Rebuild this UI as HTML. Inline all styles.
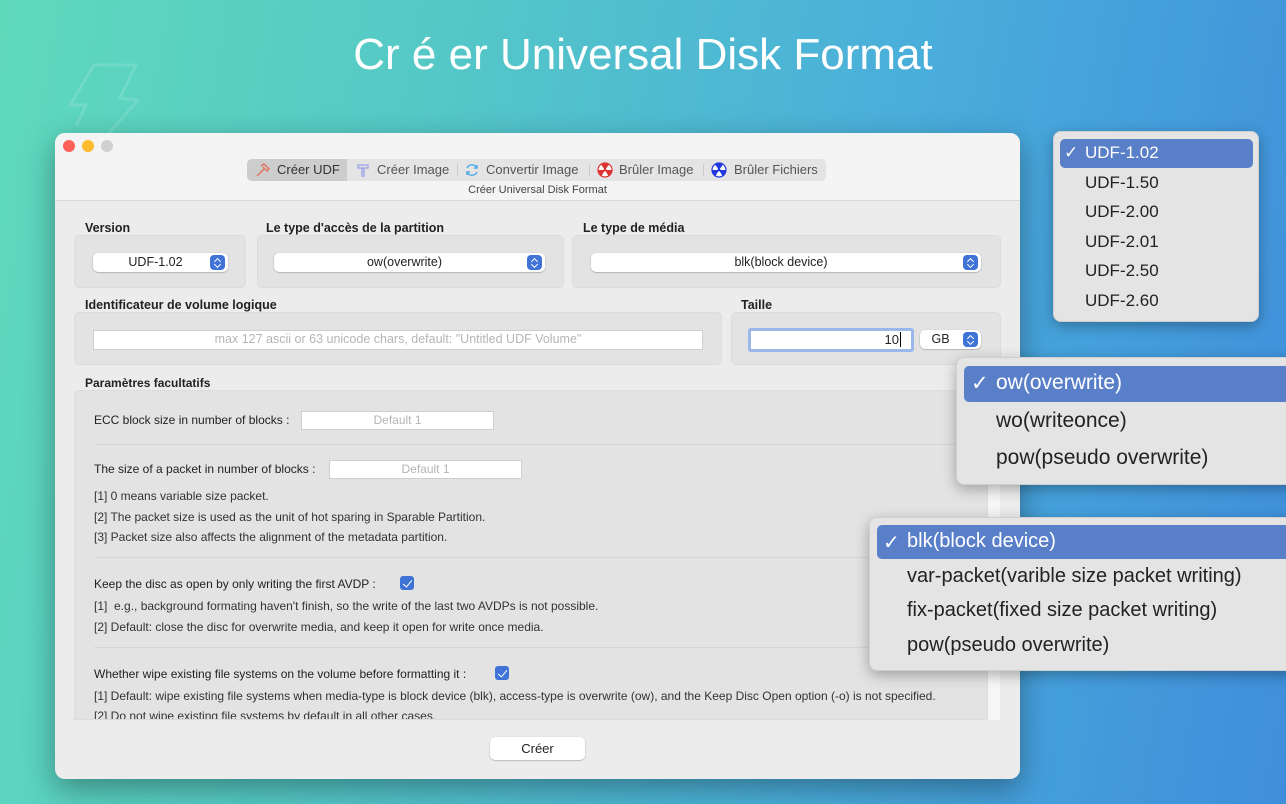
<!DOCTYPE html>
<html><head><meta charset="utf-8"><style>
*{margin:0;padding:0;box-sizing:border-box}
body{width:1286px;height:804px;overflow:hidden;position:relative;font-family:"Liberation Sans",sans-serif;
background:linear-gradient(100deg,#5fd9bc 0%,#55c9c6 30%,#4aaedb 65%,#3f8edb 100%);}
.a{position:absolute}
.t{position:absolute;white-space:nowrap}
.win{left:55px;top:133px;width:965px;height:646px;background:#ececec;border-radius:10px;overflow:hidden;box-shadow:0 10px 30px rgba(0,0,0,.35)}
.bx{background:#e3e3e3;border-radius:5px;border:1px solid #dcdcdc}
.pop{background:#fff;border-radius:5px;box-shadow:0 0.5px 1.5px rgba(0,0,0,.35);font-size:12.5px;color:#222;text-align:center;line-height:19px}
.ar{position:absolute;right:3px;top:2px;width:15px;height:15px;border-radius:4px;background:#3f74d6}
.ar:before,.ar:after{content:"";position:absolute;left:5px;width:4px;height:4px;border:solid #fff;border-width:1.3px 0 0 1.3px}
.ar:before{top:3.5px;transform:rotate(45deg)}
.ar:after{top:6.5px;transform:rotate(225deg)}
.lb{font-size:12.5px;font-weight:bold;color:#222}
.inp{background:#fff;border:1px solid #cfcfcf;font-size:12px;color:#b5b5b5;text-align:center;line-height:17px}
.n{font-size:12px;color:#333}
.sep{height:1px;background:#d6d6d6}
.cb{width:14px;height:14px;border-radius:3px;background:#3f74d6}
.cb:after{content:"";position:absolute;left:4.5px;top:1.5px;width:4px;height:8px;border:solid #fff;border-width:0 1.8px 1.8px 0;transform:rotate(40deg)}
.menu{background:#e4e4e4;border-radius:8px;box-shadow:0 4px 14px rgba(0,0,0,.3);border:1px solid #cfcfcf}
.hl{background:#5a7fc9;border-radius:5px}
.mi{color:#222}
</style></head><body>
<svg class="a" style="left:64px;top:60px" width="80" height="75" viewBox="0 0 80 75"><path d="M30 5 L72 5 L56 38 L74 40 L44 74 M12 66 L22 45 L6 45 L30 5" fill="none" stroke="rgba(255,255,255,.13)" stroke-width="3" stroke-linejoin="round"/></svg>
<div class="t" style="left:0;width:1286px;top:26px;text-align:center;color:#fff;font-size:44px;line-height:58px">Cr é er Universal Disk Format</div>

<div class="a win">
 <div class="a" style="left:0;top:0;width:965px;height:68px;background:#f4f4f4;border-bottom:1px solid #d8d8d8"></div>
 <div class="a" style="left:8px;top:7px;width:12px;height:12px;border-radius:50%;background:#fe5f57"></div>
 <div class="a" style="left:27px;top:7px;width:12px;height:12px;border-radius:50%;background:#febc2e"></div>
 <div class="a" style="left:46px;top:7px;width:12px;height:12px;border-radius:50%;background:#d0d0d0"></div>
 <div class="a" style="left:192px;top:26px;width:579px;height:22px;background:#e4e4e4;border-radius:5px"></div>
 <div class="a" style="left:192px;top:26px;width:100px;height:22px;background:#cdcdcd;border-radius:5px 0 0 5px"></div>
 <svg class="a" style="left:200px;top:29px" width="16" height="16" viewBox="0 0 16 16"><path d="M2 14 L9 7 M6 4 L9 2 L14 7 L12 9 L8 5" fill="none" stroke="#e0715c" stroke-width="1.4"/></svg>
 <div class="t" style="left:222px;top:29px;font-size:13px;color:#333">Créer UDF</div>
 <svg class="a" style="left:300px;top:29px" width="16" height="16" viewBox="0 0 16 16"><path d="M3 3 H13 V6 H3Z M7 6 V15 M9 6 V15" fill="none" stroke="#9aa0e6" stroke-width="1.3"/></svg>
 <div class="t" style="left:322px;top:29px;font-size:13px;color:#555">Créer Image</div>
 <div class="a" style="left:402px;top:31px;width:1px;height:12px;background:#ccc"></div>
 <svg class="a" style="left:409px;top:29px" width="16" height="16" viewBox="0 0 16 16"><path d="M13 6 A5.5 5.5 0 0 0 3 6 M3 10 A5.5 5.5 0 0 0 13 10 M13 3 V6 H10 M3 13 V10 H6" fill="none" stroke="#4aa8e6" stroke-width="1.4"/></svg>
 <div class="t" style="left:431px;top:29px;font-size:13px;color:#555">Convertir Image</div>
 <div class="a" style="left:534px;top:31px;width:1px;height:12px;background:#ccc"></div>
 <svg class="a" style="left:542px;top:29px" width="16" height="16" viewBox="0 0 16 16"><circle cx="8" cy="8" r="7" fill="#fff" stroke="#d33" stroke-width="1.2"/><path d="M8 8 L4 2.5 A7 7 0 0 1 12 2.5Z M8 8 L15 8 A7 7 0 0 1 11.5 14Z M8 8 L4.5 14 A7 7 0 0 1 1 8Z" fill="#d33"/><circle cx="8" cy="8" r="1.5" fill="#d33"/></svg>
 <div class="t" style="left:564px;top:29px;font-size:13px;color:#555">Brûler Image</div>
 <div class="a" style="left:648px;top:31px;width:1px;height:12px;background:#ccc"></div>
 <svg class="a" style="left:656px;top:29px" width="16" height="16" viewBox="0 0 16 16"><circle cx="8" cy="8" r="7" fill="#fff" stroke="#2237e0" stroke-width="1.2"/><path d="M8 8 L4 2.5 A7 7 0 0 1 12 2.5Z M8 8 L15 8 A7 7 0 0 1 11.5 14Z M8 8 L4.5 14 A7 7 0 0 1 1 8Z" fill="#2237e0"/><circle cx="8" cy="8" r="1.5" fill="#2237e0"/></svg>
 <div class="t" style="left:679px;top:29px;font-size:13px;color:#555">Brûler Fichiers</div>
 <div class="t" style="left:0;width:965px;text-align:center;top:51px;font-size:11px;color:#444">Créer Universal Disk Format</div>

 <div class="t lb" style="left:30px;top:88px">Version</div>
 <div class="t lb" style="left:211px;top:88px">Le type d'accès de la partition</div>
 <div class="t lb" style="left:528px;top:88px">Le type de média</div>
 <div class="a bx" style="left:19px;top:102px;width:172px;height:53px"></div>
 <div class="a bx" style="left:202px;top:102px;width:307px;height:53px"></div>
 <div class="a bx" style="left:517px;top:102px;width:429px;height:53px"></div>
 <div class="a pop" style="left:38px;top:120px;width:135px;height:19px;padding-right:10px">UDF-1.02<div class="ar"></div></div>
 <div class="a pop" style="left:219px;top:120px;width:271px;height:19px;padding-right:10px">ow(overwrite)<div class="ar"></div></div>
 <div class="a pop" style="left:536px;top:120px;width:390px;height:19px;padding-right:10px">blk(block device)<div class="ar"></div></div>

 <div class="t lb" style="left:30px;top:165px">Identificateur de volume logique</div>
 <div class="t lb" style="left:686px;top:165px">Taille</div>
 <div class="a bx" style="left:19px;top:179px;width:648px;height:53px"></div>
 <div class="a bx" style="left:676px;top:179px;width:270px;height:53px"></div>
 <div class="a inp" style="left:38px;top:197px;width:610px;height:20px;font-size:12.5px">max 127 ascii or 63 unicode chars, default: "Untitled UDF Volume"</div>
 <div class="a" style="left:693px;top:195px;width:166px;height:24px;border:3px solid #9ab8ea;border-radius:3px;background:#fff"><div class="t" style="right:10px;top:1px;font-size:13px;color:#222;line-height:16px">10<span style="border-left:1px solid #000;margin-left:1px"></span></div></div>
 <div class="a pop" style="left:865px;top:197px;width:61px;height:19px;padding-right:20px">GB<div class="ar"></div></div>

 <div class="t lb" style="left:30px;top:243px;font-size:12px">Paramètres facultatifs</div>
 <div class="a bx" style="left:19px;top:257px;width:914px;height:330px;border-radius:5px 5px 0 0;overflow:hidden">
  <div class="t n" style="left:19px;top:22px;color:#222">ECC block size in number of blocks :</div>
  <div class="a inp" style="left:226px;top:20px;width:193px;height:19px">Default 1</div>
  <div class="a sep" style="left:19px;top:53px;width:900px"></div>
  <div class="t n" style="left:19px;top:71px;color:#222">The size of a packet in number of blocks :</div>
  <div class="a inp" style="left:254px;top:69px;width:193px;height:19px">Default 1</div>
  <div class="t n" style="left:19px;top:98px">[1] 0 means variable size packet.</div>
  <div class="t n" style="left:19px;top:119px">[2] The packet size is used as the unit of hot sparing in Sparable Partition.</div>
  <div class="t n" style="left:19px;top:139px">[3] Packet size also affects the alignment of the metadata partition.</div>
  <div class="a sep" style="left:19px;top:166px;width:900px"></div>
  <div class="t n" style="left:19px;top:186px;color:#222">Keep the disc as open by only writing the first AVDP :</div>
  <div class="a cb" style="left:325px;top:185px"></div>
  <div class="t n" style="left:19px;top:208px">[1]&nbsp; e.g., background formating haven't finish, so the write of the last two AVDPs is not possible.</div>
  <div class="t n" style="left:19px;top:229px">[2] Default: close the disc for overwrite media, and keep it open for write once media.</div>
  <div class="a sep" style="left:19px;top:256px;width:900px"></div>
  <div class="t n" style="left:19px;top:276px;color:#222">Whether wipe existing file systems on the volume before formatting it :</div>
  <div class="a cb" style="left:420px;top:275px"></div>
  <div class="t n" style="left:19px;top:298px">[1] Default: wipe existing file systems when media-type is block device (blk), access-type is overwrite (ow), and the Keep Disc Open option (-o) is not specified.</div>
  <div class="t n" style="left:19px;top:318px">[2] Do not wipe existing file systems by default in all other cases.</div>
 </div>
 <div class="a" style="left:933px;top:257px;width:12px;height:330px;background:#f6f6f6"></div>
 <div class="a pop" style="left:435px;top:604px;width:95px;height:23px;line-height:23px;font-size:13px">Créer</div>
</div>

<div class="a menu" style="left:1053px;top:131px;width:206px;height:191px">
 <div class="a hl" style="left:6px;top:7px;width:193px;height:29px"></div>
 <div class="t" style="left:10px;top:11px;font-size:17px;color:#fff">✓</div>
 <div class="t" style="left:31px;top:11px;font-size:17px;color:#fff">UDF-1.02</div>
 <div class="t mi" style="left:31px;top:41px;font-size:17px">UDF-1.50</div>
 <div class="t mi" style="left:31px;top:70px;font-size:17px">UDF-2.00</div>
 <div class="t mi" style="left:31px;top:100px;font-size:17px">UDF-2.01</div>
 <div class="t mi" style="left:31px;top:129px;font-size:17px">UDF-2.50</div>
 <div class="t mi" style="left:31px;top:159px;font-size:17px">UDF-2.60</div>
</div>

<div class="a menu" style="left:956px;top:357px;width:340px;height:128px;border-radius:8px 0 0 8px">
 <div class="a hl" style="left:7px;top:8px;width:340px;height:36px;border-radius:5px 0 0 5px"></div>
 <div class="t" style="left:14px;top:13px;font-size:21px;color:#fff">✓</div>
 <div class="t" style="left:39px;top:13px;font-size:21px;color:#fff">ow(overwrite)</div>
 <div class="t mi" style="left:39px;top:51px;font-size:21px">wo(writeonce)</div>
 <div class="t mi" style="left:39px;top:88px;font-size:21px">pow(pseudo overwrite)</div>
</div>

<div class="a menu" style="left:869px;top:517px;width:430px;height:154px;border-radius:8px 0 0 8px">
 <div class="a hl" style="left:7px;top:7px;width:430px;height:34px;border-radius:5px 0 0 5px"></div>
 <div class="t" style="left:13px;top:12px;font-size:20px;color:#fff">✓</div>
 <div class="t" style="left:37px;top:12px;font-size:20px;color:#fff">blk(block device)</div>
 <div class="t mi" style="left:37px;top:47px;font-size:20px">var-packet(varible size packet writing)</div>
 <div class="t mi" style="left:37px;top:81px;font-size:20px">fix-packet(fixed size packet writing)</div>
 <div class="t mi" style="left:37px;top:116px;font-size:20px">pow(pseudo overwrite)</div>
</div>
</body></html>
